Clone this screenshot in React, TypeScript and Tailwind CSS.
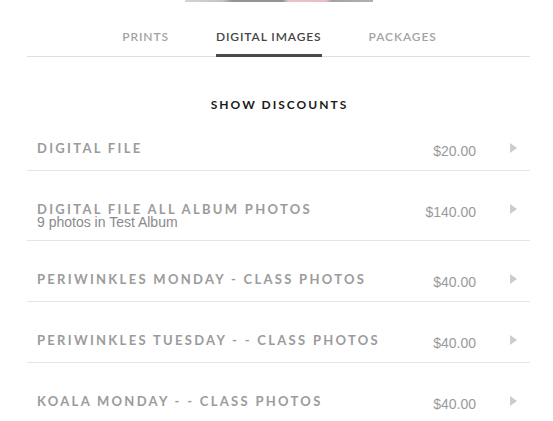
import { useState } from "react";

type Item = {
  name: string;
  sub?: string;
  price: string;
};

const items: Item[] = [
  { name: "DIGITAL FILE", price: "$20.00" },
  { name: "DIGITAL FILE ALL ALBUM PHOTOS", sub: "9 photos in Test Album", price: "$140.00" },
  { name: "PERIWINKLES MONDAY - CLASS PHOTOS", price: "$40.00" },
  { name: "PERIWINKLES TUESDAY - - CLASS PHOTOS", price: "$40.00" },
  { name: "KOALA MONDAY - - CLASS PHOTOS", price: "$40.00" },
];

const tabs = ["PRINTS", "DIGITAL IMAGES", "PACKAGES"];

const App = () => {
  const [active, setActive] = useState(1);

  const Lato = "font-['Lato','Noto_Sans',sans-serif]";

  return (
    <div className="w-[553px] h-[421px] overflow-hidden bg-white">
      {/* bottom edge of the album cover */}
      <div className="mx-auto h-[2px] w-[188px] translate-x-[2px] bg-[linear-gradient(90deg,#d4d4d4_0%,#c4c4c4_20%,#949494_25%,#949494_52%,#eac3c8_55%,#e6bec4_75%,#a3a3a3_78%,#b0b0b0_100%)]" />

      <div className="ml-[27px] w-[503px]">
        <nav className="flex justify-center gap-[47px] border-b border-[#dedede] pl-[2px]">
          {tabs.map((t, i) => (
            <button
              key={t}
              onClick={() => setActive(i)}
              className={`${Lato} -mb-px pt-[27px] pb-[9px] border-b-[3px] text-[12px] leading-4 font-semibold tracking-[0.9px] ${
                i === active
                  ? "border-[#4a4a4a] text-[#444]"
                  : "border-transparent text-[#a3a3a3]"
              }`}
            >
              {t}
            </button>
          ))}
        </nav>

        <p
          className={`${Lato} pt-[43px] text-center text-[12px] leading-[10px] font-bold tracking-[2px] text-[#1a1a1a] pl-[2px]`}
        >
          SHOW DISCOUNTS
        </p>

        <main>
          {items.map((item) => (
            <div
              key={item.name}
              className={`flex items-start border-b border-[#e6e6e6] pl-[10px] pr-[13px] pt-[32px] ${
                item.sub ? "pb-[11px]" : "pb-[16px]"
              }`}
            >
              <div className="flex-1">
                <p
                  className={`${Lato} text-[13px] leading-[12px] font-bold tracking-[2.3px] text-[#9b9b9b]`}
                >
                  {item.name}
                </p>
                {item.sub && (
                  <p className="font-['Liberation_Sans',Arial,sans-serif] text-[14px] leading-[14px] text-[#8a8a8a]">
                    {item.sub}
                  </p>
                )}
              </div>
              <p className="relative top-[3px] font-['Liberation_Sans',Arial,sans-serif] text-[14px] leading-[12px] text-[#9a9a9a]">
                {item.price}
              </p>
              <span className="ml-[34px] mt-[1px] h-0 w-0 border-y-[5px] border-l-[7px] border-y-transparent border-l-[#cccccc]" />
            </div>
          ))}
        </main>
      </div>
    </div>
  );
};

export default App;
